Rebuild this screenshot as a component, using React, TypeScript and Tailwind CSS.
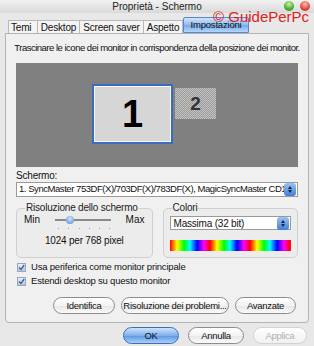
const font = 'font-["Liberation_Sans",Arial,sans-serif]';

function AquaButton({ label, className = '', primary = false, disabled = false }: { label: string; className?: string; primary?: boolean; disabled?: boolean }) {
    const skin = primary
        ? 'border-[#3d6fb8] bg-[linear-gradient(#cfe3fb,#7fb0ec_50%,#5a96e2_51%,#a9d0fa)] text-[#111]'
        : disabled
          ? 'border-[#d2d2d2] bg-[linear-gradient(#ffffff,#f1f1f1)] text-[#b0b0b0]'
          : 'border-[#8c8c8c] bg-[linear-gradient(#ffffff,#f3f3f3_50%,#e6e6e6_51%,#fafafa)] text-[#111]';
    return (
        <div className={`flex h-[17px] items-center justify-center whitespace-nowrap rounded-full border text-[9.5px] leading-none tracking-[-0.3px] ${skin} ${className}`}>
            {label}
        </div>
    );
}

function Spinner() {
    return (
        <div className="flex h-[13px] w-[12px] shrink-0 flex-col items-center justify-center gap-[1px] rounded-[3px] bg-[linear-gradient(#9cc3f2,#3f7fd6)]">
            <span className="h-0 w-0 border-x-[2.5px] border-b-[3px] border-x-transparent border-b-[#10243f]" />
            <span className="h-0 w-0 border-x-[2.5px] border-t-[3px] border-x-transparent border-t-[#10243f]" />
        </div>
    );
}

function Check({ label }: { label: string }) {
    return (
        <div className="flex h-[14px] items-center gap-[5px] whitespace-nowrap text-[9.5px] tracking-[-0.2px] text-[#111]">
            <span className="flex h-[9px] w-[9px] items-center justify-center border border-[#9aa8bd] bg-[linear-gradient(#e9eef6,#b9c7dc)]">
                <svg width="7" height="7" viewBox="0 0 7 7">
                    <path d="M1 3.5 L3 5.5 L6.2 1" stroke="#3a64a8" strokeWidth="1.4" fill="none" />
                </svg>
            </span>
            {label}
        </div>
    );
}

function Group({ title, children, className = '' }: { title: string; children: React.ReactNode; className?: string }) {
    return (
        <fieldset className={`rounded-[5px] border border-[#cfcfcf] bg-[#ececec] px-[6px] pb-[5px] ${className}`}>
            <legend className="ml-[2px] whitespace-nowrap px-[1px] text-[10px] leading-[12px] tracking-[-0.2px] text-[#222]">{title}</legend>
            {children}
        </fieldset>
    );
}

export default function App() {
    return (
        <div className={`relative flex h-[346px] w-[314px] flex-col overflow-hidden bg-[#e8e8e8] ${font}`}>
            {/* title bar */}
            <div className="relative flex h-[13px] items-center justify-center bg-[linear-gradient(#f2f2f2,#d9d9d9)] text-[10px] text-[#222]">
                Proprietà - Schermo
                <span className="absolute right-[20px] top-[1px] h-[10px] w-[10px] rounded-full bg-[radial-gradient(circle_at_50%_30%,#c8f5a8,#39a020_70%)]" />
                <span className="absolute right-[4px] top-[1px] h-[10px] w-[10px] rounded-full bg-[radial-gradient(circle_at_50%_30%,#ffc0b8,#d8342a_70%)]" />
            </div>

            {/* tabs */}
            <div className="mt-[4px] flex h-[16px] items-end whitespace-nowrap pl-[8px] text-[10px] tracking-[-0.2px] text-[#111]">
                <div className="flex h-[13px] w-[30px] items-center border border-b-0 border-[#b8b8b8] bg-[#f4f4f4] pl-[2px]">Temi</div>
                <div className="flex h-[13px] w-[42px] items-center justify-center border border-b-0 border-l-0 border-[#b8b8b8] bg-[#f4f4f4]">Desktop</div>
                <div className="flex h-[13px] w-[64px] items-center justify-center border border-b-0 border-l-0 border-[#b8b8b8] bg-[#f4f4f4]">Screen saver</div>
                <div className="flex h-[13px] w-[39px] items-center justify-center border border-b-0 border-l-0 border-[#b8b8b8] bg-[#f4f4f4]">Aspetto</div>
                <div className="flex h-[16px] w-[66px] items-center justify-center rounded-t-[2px] border border-[#5a86c6] bg-[linear-gradient(#cfe3fb,#8fbcef_50%,#74a9ea_51%,#b4d6fb)] text-[9.5px]">Impostazioni</div>
            </div>

            {/* panel */}
            <div className="mx-[5px] flex h-[290px] flex-col rounded-b-[4px] border border-[#b4b4b4] bg-[#f0f0f0] px-[10px]">
                <div className="mt-[8px] flex justify-center whitespace-nowrap text-[9.5px] leading-[12px] tracking-[-0.5px] text-[#111]">
                    Trascinare le icone dei monitor in corrispondenza della posizione dei monitor.
                </div>
                <div className="mt-[9px] flex h-[104px] items-start justify-center bg-[#808080] pr-[6px] pt-[21px]">
                    <div className="flex h-[60px] w-[81px] items-center justify-center border-[2px] border-[#3c6cc0] bg-[#d6d6d6] shadow-[inset_0_0_0_1px_#f4f8ff]">
                        <span className="text-[38px] font-bold leading-none text-black">1</span>
                    </div>
                    <div className="ml-[2px] mt-[4px] flex h-[31px] w-[41px] items-center justify-center bg-[repeating-conic-gradient(#c4c4c4_0_25%,#9a9a9a_0_50%)] bg-[length:2px_2px]">
                        <span className="text-[19px] font-bold leading-none text-[#333]">2</span>
                    </div>
                </div>

                <div className="mt-[3px] text-[10px] leading-[12px] tracking-[-0.2px] text-[#111]">Schermo:</div>
                <div className="flex h-[15px] items-center justify-between border border-[#9a9a9a] bg-white pl-[2px] pr-[1px] text-[9.5px] tracking-[-0.45px] text-[#111]">
                    <span className="min-w-0 overflow-hidden whitespace-nowrap">1. SyncMaster 753DF(X)/703DF(X)/783DF(X), MagicSyncMaster CD17</span>
                    <Spinner />
                </div>

                <div className="mt-[5px] flex gap-[10px]">
                    <Group title="Risoluzione dello schermo" className="h-[56px] w-[138px]">
                        <div className="flex items-center justify-between px-[1px] text-[10px] leading-[12px] text-[#111]">
                            <span>Min</span>
                            <div className="relative h-[8px] w-[56px]">
                                <div className="absolute left-0 right-0 top-[3px] h-[2px] bg-[#8a8a8a]" />
                                <div className="absolute left-[11px] top-0 h-[8px] w-[8px] rounded-full bg-[radial-gradient(circle_at_50%_35%,#d4e6fb,#4f86d6)]" />
                            </div>
                            <span>Max</span>
                        </div>
                        <div className="mx-auto mt-[2px] flex w-[52px] justify-between">
                            {[0, 1, 2, 3, 4, 5].map((i) => (
                                <span key={i} className="h-[1px] w-[1px] bg-[#9a9a9a]" />
                            ))}
                        </div>
                        <div className="mt-[6px] whitespace-nowrap text-center text-[10px] leading-[12px] tracking-[-0.2px] text-[#111]">1024 per 768 pixel</div>
                    </Group>
                    <Group title="Colori" className="h-[56px] w-[137px]">
                        <div className="mt-[2px] flex h-[14px] items-center justify-between border border-[#9a9a9a] bg-white pl-[3px] pr-[1px] text-[10px] tracking-[-0.2px] text-[#111]">
                            <span className="whitespace-nowrap">Massima (32 bit)</span>
                            <Spinner />
                        </div>
                        <div className="mt-[10px] h-[11px] bg-[repeating-linear-gradient(90deg,#ff0000_0px,#ffff00_7px,#00ff00_14px,#00ffff_20px,#0000ff_27px,#ff00ff_34px,#ff0000_40px)]" />
                    </Group>
                </div>

                <div className="mt-[2px] flex flex-col pl-[1px]">
                    <Check label="Usa periferica come monitor principale" />
                    <Check label="Estendi desktop su questo monitor" />
                </div>

                <div className="mt-[9px] flex justify-end gap-[6px] pr-[2px]">
                    <AquaButton label="Identifica" className="w-[62px]" />
                    <AquaButton label="Risoluzione dei problemi..." className="w-[108px]" />
                    <AquaButton label="Avanzate" className="w-[61px]" />
                </div>
            </div>

            {/* dialog buttons */}
            <div className="mt-[4px] flex justify-end gap-[9px] pr-[7px]">
                <AquaButton label="OK" primary className="w-[56px]" />
                <AquaButton label="Annulla" className="w-[56px]" />
                <AquaButton label="Applica" disabled className="w-[54px]" />
            </div>

            <div className="pointer-events-none absolute left-[213px] top-[9px] text-[15px] leading-none text-[#e02020]">© GuidePerPc</div>
        </div>
    );
}
